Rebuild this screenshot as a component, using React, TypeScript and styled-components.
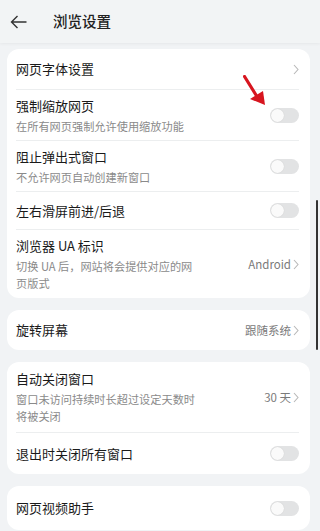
import React from "react";
import styled, { createGlobalStyle } from "styled-components";

const GlobalStyle = createGlobalStyle`
  html, body {
    margin: 0;
    padding: 0;
    background: #f1f3f5;
    font-family: "Noto Sans CJK SC", "Noto Sans", sans-serif;
    color: #1f1f1f;
  }
  * {
    box-sizing: border-box;
  }
`;

type RowProps = {
  title: string;
  sub?: string;
  value?: string;
  toggle?: boolean;
  chevron?: boolean;
  last?: boolean;
  h?: number;
};

const Chevron = () => (
  <svg width="6" height="11" viewBox="0 0 6 11">
    <path d="M1 1 L5 5.5 L1 10" fill="none" stroke="#b8b8b8" strokeWidth="1.1" />
  </svg>
);

const Row = (props: RowProps) => {
  return (
    <StyledRow $last={props.last} $h={props.h ?? 40}>
      <Texts>
        <Title>{props.title}</Title>
        {props.sub && <Sub>{props.sub}</Sub>}
      </Texts>
      <Right>
        {props.value && <Value>{props.value}</Value>}
        {props.chevron && <Chevron />}
        {props.toggle && (
          <Toggle>
            <Knob />
          </Toggle>
        )}
      </Right>
    </StyledRow>
  );
};

export default function App() {
  return (
    <Page>
      <GlobalStyle />
      <Header>
        <svg width="17" height="14" viewBox="0 0 17 14">
          <path d="M16.5 7 H1.5 M7.5 1 L1.5 7 L7.5 13" fill="none" stroke="#333" strokeWidth="1.4" />
        </svg>
        <HeaderTitle>浏览设置</HeaderTitle>
      </Header>
      <Body>
        <Card>
          <Row title="网页字体设置" chevron h={41} />
          <Row title="强制缩放网页" sub="在所有网页强制允许使用缩放功能" toggle h={51} />
          <Row title="阻止弹出式窗口" sub="不允许网页自动创建新窗口" toggle h={51} />
          <Row title="左右滑屏前进/后退" toggle h={38} />
          <Row title="浏览器 UA 标识" sub="切换 UA 后，网站将会提供对应的网页版式" value="Android" chevron last h={68} />
          <Arrow width="26" height="34" viewBox="0 0 26 34">
            <path d="M1.5 1.5 L13 20" stroke="#d7151f" strokeWidth="3.2" strokeLinecap="round" />
            <path d="M7 24 L20 16 L22 30 Z" fill="#d7151f" />
          </Arrow>
        </Card>
        <Card>
          <Row title="旋转屏幕" value="跟随系统" chevron last />
        </Card>
        <Card>
          <Row title="自动关闭窗口" sub="窗口未访问持续时长超过设定天数时将被关闭" value="30 天" chevron h={71} />
          <Row title="退出时关闭所有窗口" toggle last h={41} />
        </Card>
        <Card>
          <Row title="网页视频助手" toggle last h={44} />
        </Card>
      </Body>
      <ScrollBar />
    </Page>
  );
}

const Page = styled.div`
  position: relative;
  width: 320px;
  height: 531px;
  overflow: hidden;
  background: #f1f3f5;
`;

const Header = styled.div`
  height: 43px;
  display: flex;
  align-items: center;
  padding-left: 10px;
  gap: 26px;
  background: #f2f4f5;
  box-shadow: 0 1px 3px rgba(0, 0, 0, 0.05);
`;

const HeaderTitle = styled.div`
  font-size: 14.5px;
  font-weight: 500;
  color: #222;
  margin-top: -2px;
`;

const Body = styled.div`
  padding: 6px 10px 0 7px;
  display: flex;
  flex-direction: column;
  gap: 12px;
`;

const Card = styled.div`
  position: relative;
  background: #fff;
  border-radius: 12px;
  padding: 0 11px 0 9px;
`;

const StyledRow = styled.div<{ $last?: boolean; $h: number }>`
  display: flex;
  align-items: center;
  justify-content: space-between;
  height: ${(p) => p.$h}px;
  border-bottom: ${(p) => (p.$last ? "none" : "1px solid #eceeef")};
`;

const Texts = styled.div`
  display: flex;
  flex-direction: column;
  max-width: 182px;
  gap: 2px;
`;

const Title = styled.div`
  font-size: 13px;
  line-height: 20px;
  color: #1a1a1a;
`;

const Sub = styled.div`
  font-size: 11.2px;
  line-height: 17px;
  color: #8a8a8a;
`;

const Right = styled.div`
  display: flex;
  align-items: center;
  gap: 2px;
`;

const Value = styled.div`
  font-size: 11.5px;
  color: #7a7a7a;
`;

const Toggle = styled.div`
  width: 29px;
  height: 15px;
  border-radius: 8px;
  background: #e2e3e4;
  position: relative;
`;

const Knob = styled.div`
  position: absolute;
  left: 1px;
  top: 1px;
  width: 13px;
  height: 13px;
  border-radius: 50%;
  background: #fafafa;
  box-shadow: 0 0 1px rgba(0, 0, 0, 0.15);
`;

const Arrow = styled.svg`
  position: absolute;
  left: 236px;
  top: 26px;
`;

const ScrollBar = styled.div`
  position: absolute;
  right: 2px;
  top: 200px;
  width: 2px;
  height: 150px;
  border-radius: 1px;
  background: #333;
`;
